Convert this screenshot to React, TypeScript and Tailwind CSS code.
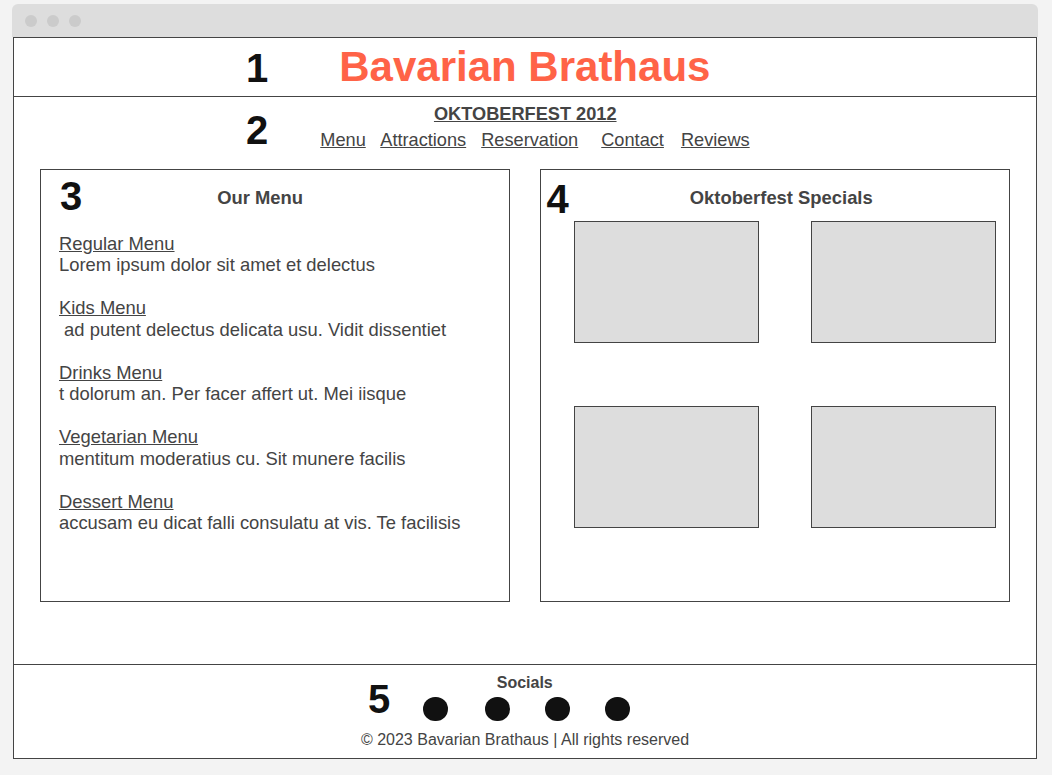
const menuItems = [
  { title: "Regular Menu", text: "Lorem ipsum dolor sit amet et delectus" },
  { title: "Kids Menu", text: "\u00a0ad putent delectus delicata usu. Vidit dissentiet" },
  { title: "Drinks Menu", text: "t dolorum an. Per facer affert ut. Mei iisque" },
  { title: "Vegetarian Menu", text: "mentitum moderatius cu. Sit munere facilis" },
  { title: "Dessert Menu", text: "accusam eu dicat falli consulatu at vis. Te facilisis" },
];

const navLinks = [
  { label: "Menu", cls: "" },
  { label: "Attractions", cls: "ml-[14.5px]" },
  { label: "Reservation", cls: "ml-[15px]" },
  { label: "Contact", cls: "ml-[23px]" },
  { label: "Reviews", cls: "ml-[17px]" },
];

// social dot spacing taken from the mock
const dotGaps = ["", "ml-[37px]", "ml-[35px]", "ml-[35px]"];

const Num = ({ n, className = "" }: { n: string; className?: string }) => (
  <div className={`text-[40px] font-bold leading-none text-[#111] ${className}`}>{n}</div>
);

const App = () => {
  return (
    <div
      className="w-[1052px] h-[775px] bg-[#f3f3f3] pt-[4px] pl-[12px] text-[#444]"
      style={{ fontFamily: '"Liberation Sans", Arial, sans-serif' }}
    >
      {/* browser chrome */}
      <div className="w-[1026px] h-[33px] bg-[#dddddd] rounded-t-[6px] flex items-center gap-[10px] pl-[13px]">
        <span className="w-[12px] h-[12px] rounded-full bg-[#cbcbcb]" />
        <span className="w-[12px] h-[12px] rounded-full bg-[#cbcbcb]" />
        <span className="w-[12px] h-[12px] rounded-full bg-[#cbcbcb]" />
      </div>

      <div className="ml-[1px] w-[1024px] h-[722px] border border-[#444] bg-white flex flex-col">
        {/* 1 - header */}
        <header className="h-[59px] shrink-0 border-b border-[#444] flex items-center pl-[232px]">
          <Num n="1" className="mt-[1px]" />
          <h1 className="ml-[71px] text-[42px] font-bold leading-none text-[#ff6347]">
            Bavarian Brathaus
          </h1>
        </header>

        {/* 2 - nav */}
        <div className="h-[72px] shrink-0 flex items-start pl-[232px]">
          <Num n="2" className="mt-[13px]" />
          <div className="ml-[33px] w-[448px] flex flex-col items-center pt-[7px]">
            <div className="text-[18.2px] leading-[1.2] font-bold underline">OKTOBERFEST 2012</div>
            <nav className="w-full flex pl-[19px] mt-[4px] text-[18.2px] leading-[1.2]">
              {navLinks.map((l) => (
                <a key={l.label} className={`underline ${l.cls}`}>
                  {l.label}
                </a>
              ))}
            </nav>
          </div>
        </div>

        {/* 3 + 4 */}
        <div className="h-[433px] shrink-0 flex gap-[30px] px-[26px]">
          <section className="w-[470px] shrink-0 border border-[#444] pl-[18px] pt-[5.5px]">
            <div className="flex items-start h-[40px]">
              <Num n="3" className="ml-[1px]" />
              <h2 className="ml-[135px] mt-[11px] text-[18.4px] leading-[1.2] font-bold">Our Menu</h2>
            </div>
            <div className="mt-[17px] flex flex-col gap-[21.5px] text-[18.4px] leading-[21.5px]">
              {menuItems.map((m) => (
                <div key={m.title}>
                  <div className="underline">{m.title}</div>
                  <div>{m.text}</div>
                </div>
              ))}
            </div>
          </section>

          <section className="w-[470px] shrink-0 border border-[#444] pt-[8.5px]">
            <div className="flex items-start h-[42.5px] pl-[5.5px]">
              <Num n="4" />
              <h2 className="ml-[121px] mt-[8px] text-[18.4px] leading-[1.2] font-bold">
                Oktoberfest Specials
              </h2>
            </div>
            <div className="grid grid-cols-[185px_185px] gap-x-[52px] gap-y-[63px] pl-[33px]">
              {[0, 1, 2, 3].map((i) => (
                <div key={i} className="h-[122px] bg-[#dddddd] border border-[#444]" />
              ))}
            </div>
          </section>
        </div>

        <div className="h-[62px] shrink-0" />

        {/* 5 - footer */}
        <footer className="h-[94px] shrink-0 border-t border-[#444] flex flex-col pt-[8px]">
          <div className="flex items-start pl-[354px]">
            <Num n="5" className="mt-[6px] mr-[33px]" />
            <div className="flex flex-col items-center">
              <div className="mr-[4px] text-[16px] leading-[1.2] font-bold">Socials</div>
              <div className="flex mt-[5px]">
                {dotGaps.map((g, i) => (
                  <span key={i} className={`w-[25px] h-[24px] rounded-full bg-[#111] ${g}`} />
                ))}
              </div>
            </div>
          </div>
          <div className="mt-[9px] text-center text-[16px] leading-[1.2]">
            © 2023 Bavarian Brathaus | All rights reserved
          </div>
        </footer>
      </div>
    </div>
  );
};

export default App;
